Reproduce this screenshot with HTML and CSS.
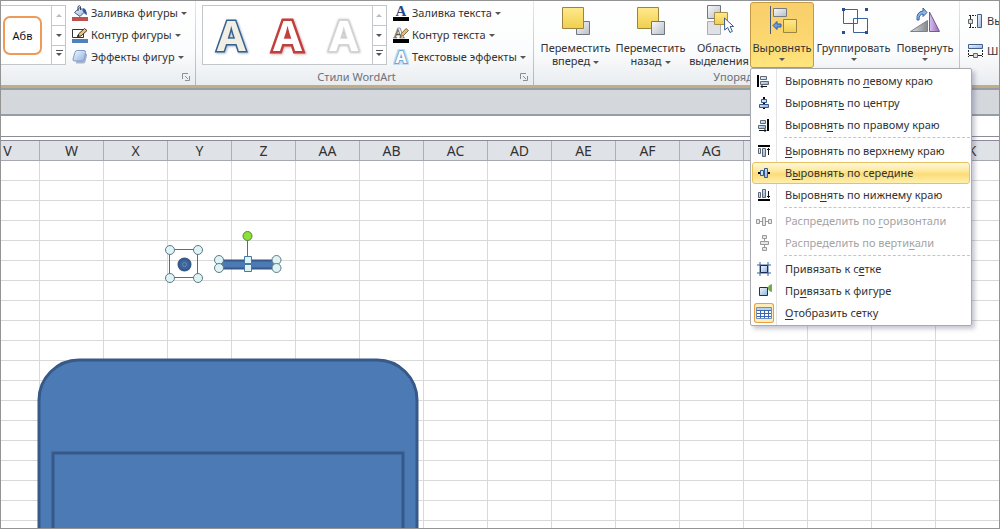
FILE: index.html
```html
<!DOCTYPE html>
<html lang="ru">
<head>
<meta charset="utf-8">
<title>Выравнивание фигур</title>
<link rel="stylesheet" href="styles.css">
</head>
<body>
<svg class="defs" aria-hidden="true">
  <defs>
    <linearGradient id="gold" x1="0" y1="0" x2="0" y2="1"><stop offset="0" stop-color="#ffe98c"/><stop offset="1" stop-color="#f0cf4e"/></linearGradient>
    <linearGradient id="steel" x1="0" y1="0" x2="1" y2="1"><stop offset="0" stop-color="#f8f9fa"/><stop offset="1" stop-color="#b9bec6"/></linearGradient>
    <linearGradient id="blue" x1="0" y1="0" x2="1" y2="1"><stop offset="0" stop-color="#f4f9ff"/><stop offset="1" stop-color="#8fb2dd"/></linearGradient>
    <linearGradient id="violet" x1="0" y1="0" x2="1" y2="0"><stop offset="0" stop-color="#d9c3ec"/><stop offset="1" stop-color="#9068b4"/></linearGradient>
    <linearGradient id="gray" x1="0" y1="0" x2="1" y2="0"><stop offset="0" stop-color="#dcdfe2"/><stop offset="1" stop-color="#85898f"/></linearGradient>
  </defs>
</svg>
<main class="window">
  <header class="ribbon">
    <section class="group group-shapes">
      <div class="row">
        <div class="gallery gallery-shape">
          <button class="shape-style">Абв</button>
          <div class="scroller">
            <button aria-label="Вверх" disabled><i class="arrow up"></i></button>
            <button aria-label="Вниз"><i class="arrow"></i></button>
            <button aria-label="Ещё"><i class="arrow more"></i></button>
          </div>
        </div>
        <div class="tools">
          <button class="tool">
            <svg width="16" height="16" viewBox="0 0 16 16"><path d="M2.500 7.500 8 2.500l4.500 4.500L8 11.500z" fill="url(#blue)" stroke="#4a5c7c"/><path d="M6 6V1.500q1.500-1.500 2.500 0V5" fill="none" stroke="#39455c"/><path d="M10.500 3q4 0 4.500 7-3-1-4-4z" fill="#2f5aa0"/><path d="M0 12h16v4H0z" fill="#c0504d"/></svg>
            Заливка фигуры<i class="arrow"></i></button>
          <button class="tool">
            <svg width="16" height="16" viewBox="0 0 16 16"><path d="M.5 2.500h11v8H.5z" fill="#fff" stroke="#333"/><path d="M5.500 9.500 7 6.500 12.500 1.500 15 3.500 9 9z" fill="#e9c37d" stroke="#4d3d28"/><path d="m5 10 1-2.500L7.500 9z" fill="#222"/><path d="M0 12h16v4H0z" fill="#4f81bd"/></svg>
            Контур фигуры<i class="arrow"></i></button>
          <button class="tool">
            <svg width="16" height="16" viewBox="0 0 16 16"><path d="M5 4.500h9q1.500 0 1 2l-1.500 6q-.5 2-2 2H4z" fill="#a9b6cc"/><path d="M5 1.500h7q2 0 1.500 2l-1 6.500q-.5 2-2.500 2H2.500Q.5 12 1 10l2-6.500q.5-2 2-2z" fill="url(#blue)" stroke="#7f9dca"/></svg>
            Эффекты фигур<i class="arrow"></i></button>
        </div>
      </div>
      <footer><span></span><button class="launcher" aria-label="Параметры фигур"><svg width="8" height="8" viewBox="0 0 8 8"><path d="M.5 6V.5H6M3 3l3 3M7.500 3v4.500H3" fill="none" stroke="#8a8f96"/></svg></button></footer>
    </section>

    <section class="group group-wordart">
      <div class="row">
        <div class="gallery gallery-art">
          <button class="art art-blue">A</button>
          <button class="art art-red">A</button>
          <button class="art art-white">A</button>
          <div class="scroller">
            <button aria-label="Вверх" disabled><i class="arrow up"></i></button>
            <button aria-label="Вниз"><i class="arrow"></i></button>
            <button aria-label="Ещё"><i class="arrow more"></i></button>
          </div>
        </div>
        <div class="tools">
          <button class="tool">
            <svg width="16" height="16" viewBox="0 0 16 16"><text x="8" y="11" class="icon-a" fill="#27498a">A</text><path d="M0 12h16v4H0z"/></svg>
            Заливка текста<i class="arrow"></i></button>
          <button class="tool">
            <svg width="16" height="16" viewBox="0 0 16 16"><text x="6" y="11" class="icon-a" fill="#fff" stroke="#555" stroke-width=".7">A</text><path d="M7 9.500 8.500 6.500 13 1.500 15.500 3.500 10.500 8.500z" fill="#e6bb78" stroke="#6b5132" stroke-width=".8"/><path d="M0 12h16v4H0z"/></svg>
            Контур текста<i class="arrow"></i></button>
          <button class="tool">
            <svg width="16" height="16" viewBox="0 0 16 16"><text x="8" y="14" class="icon-glow" fill="#fff" stroke="#c3def2" stroke-width="5">A</text><text x="8" y="14" class="icon-glow" fill="#fff" stroke="#6ea8d6" stroke-width="2">A</text></svg>
            Текстовые эффекты<i class="arrow"></i></button>
        </div>
      </div>
      <footer><span>Стили WordArt</span><button class="launcher" aria-label="Параметры WordArt"><svg width="8" height="8" viewBox="0 0 8 8"><path d="M.5 6V.5H6M3 3l3 3M7.500 3v4.500H3" fill="none" stroke="#8a8f96"/></svg></button></footer>
    </section>

    <section class="group group-arrange">
      <div class="row">
        <button class="big w-move">
          <svg width="32" height="32" viewBox="0 0 32 32"><path d="M16.500 16.500h13v13h-13z" fill="url(#steel)" stroke="#72777f"/><path d="M2.500 2.500h21v21h-21z" fill="url(#gold)" stroke="#9b8440"/></svg>
          <span>Переместить<br>вперед<i class="arrow"></i></span></button>
        <button class="big w-move">
          <svg width="32" height="32" viewBox="0 0 32 32"><path d="M2.500 2.500h21v21h-21z" fill="url(#gold)" stroke="#9b8440"/><path d="M16.500 16.500h13v13h-13z" fill="url(#steel)" stroke="#72777f"/></svg>
          <span>Переместить<br>назад<i class="arrow"></i></span></button>
        <button class="big w-area">
          <svg width="32" height="32" viewBox="0 0 32 32"><path d="M4.500.5h13v13h-13z" fill="url(#steel)" stroke="#72777f"/><path d="M4.500 16.500h13v13h-13z" fill="#dfe1e4" stroke="#a9adb3"/><path d="M11.500 7.500h13v12h-13z" fill="url(#gold)" stroke="#a68f46"/><path d="m21.500 13 .2 12 3-2.500 2.300 5 2.400-1.200-2.300-4.800h3.500z" fill="#fff" stroke="#3e5a86"/></svg>
          <span>Область<br>выделения</span></button>
        <div class="drop">
          <button class="big active" aria-expanded="true">
            <svg width="32" height="32" viewBox="0 0 32 32"><path d="M4.500 1v28" stroke="#4b5b75"/><path d="M7.500 3.500h13v8h-13z" fill="url(#steel)" stroke="#767b83"/><path d="M17.500 14.500h13v13h-13z" fill="url(#gold)" stroke="#9b8440"/><path d="m7 20.500 4-4V19h4v3h-4v2.500z" fill="#6a9be0" stroke="#345c9c"/></svg>
            <span>Выровнять</span><i class="arrow"></i></button>
          <div class="menu" role="menu">
            <button class="item"><svg width="16" height="16" viewBox="0 0 16 16"><path d="M1 2h2v12H1z"/><path d="M4.500 3.500h6v3h-6zM4.500 8.500h8v3h-8z" fill="url(#blue)" stroke="#5c6675"/><path d="M5 13.500h6M6.500 12 5 13.500 6.500 15" fill="none" stroke="#111"/></svg><span>Выровнять по <u>л</u>евому краю</span></button>
            <button class="item"><svg width="16" height="16" viewBox="0 0 16 16"><path d="M7 2h2v12H7z"/><path d="M5.500 4.500h5v3h-5zM3.500 9.500h9v3h-9z" fill="url(#blue)" stroke="#365789"/></svg><span>Выровнят<u>ь</u> по центру</span></button>
            <button class="item"><svg width="16" height="16" viewBox="0 0 16 16"><path d="M11 2h2v12h-2z"/><path d="M4.500 3.500h5v3h-5zM2.500 8.500h7v3h-7z" fill="url(#blue)" stroke="#5c6675"/><path d="M3 13.500h7M8.500 12l1.500 1.500L8.500 15" fill="none" stroke="#111"/></svg><span>Выровн<u>я</u>ть по правому краю</span></button>
            <hr>
            <button class="item"><svg width="16" height="16" viewBox="0 0 16 16"><path d="M2 2h12v2H2z"/><path d="M2.500 5.500h2v5h-2zM6.500 5.500h3v8h-3z" fill="url(#blue)" stroke="#5c6675"/><path d="M12.500 5v7M11 7l1.500-1.500L14 7" fill="none" stroke="#111"/></svg><span><u>В</u>ыровнять по верхнему краю</span></button>
            <button class="item selected"><svg width="16" height="16" viewBox="0 0 16 16"><path d="M2 7h12v2H2z"/><path d="M4.500 5.500h3v5h-3zM8.500 3.500h3v9h-3z" fill="url(#blue)" stroke="#365789"/></svg><span>В<u>ы</u>ровнять по середине</span></button>
            <button class="item"><svg width="16" height="16" viewBox="0 0 16 16"><path d="M2 12h12v2H2z"/><path d="M2.500 5.500h2v5h-2zM6.500 2.500h3v8h-3z" fill="url(#blue)" stroke="#5c6675"/><path d="M12.500 4v7M11 9l1.500 1.500L14 9" fill="none" stroke="#111"/></svg><span>Выров<u>н</u>ять по нижнему краю</span></button>
            <hr>
            <button class="item" disabled><svg width="16" height="16" viewBox="0 0 16 16"><path d="M0 8.500h16" stroke="#999"/><path d="M.5 6.500h3v4h-3zM6.500 4.500h3v8h-3zM12.500 6.500h3v4h-3z" fill="#e6e6e6" stroke="#999"/></svg><span>Распределить по <u>г</u>оризонтали</span></button>
            <button class="item" disabled><svg width="16" height="16" viewBox="0 0 16 16"><path d="M8.500 0v16" stroke="#999"/><path d="M6.500.5h4v3h-4zM4.500 6.500h8v3h-8zM6.500 12.500h4v3h-4z" fill="#e6e6e6" stroke="#999"/></svg><span>Распределить по верти<u>к</u>али</span></button>
            <hr>
            <button class="item"><svg width="16" height="16" viewBox="0 0 16 16"><path d="M4 1v14M12 1v14M1 4h14M1 12h14" stroke="#365f9c"/><path d="M4.500 4.500h7v7h-7z" fill="url(#blue)" stroke="#182d55"/></svg><span>Привязать к с<u>е</u>тке</span></button>
            <button class="item"><svg width="16" height="16" viewBox="0 0 16 16"><path d="M16 1v8q-4-1-4-4t4-4z" fill="#72b043"/><path d="M3.500 4.500h8v8h-8z" fill="url(#blue)" stroke="#2b3038"/></svg><span>Пр<u>и</u>вязать к фигуре</span></button>
            <button class="item checked"><svg width="16" height="16" viewBox="0 0 16 16"><path d="M.5 2.500h15v11H.5z" fill="#fff" stroke="#6d8fc4"/><path d="M1 3h14v2H1z" fill="#bdd0ec"/><path d="M4.500 5v8M8.500 5v8M12.500 5v8M1 5.500h14M1 8.500h14M1 11.500h14" stroke="#3d68ad"/></svg><span><u>О</u>тобразить сетку</span></button>
          </div>
        </div>
        <button class="big w-group">
          <svg width="32" height="32" viewBox="0 0 32 32"><g fill="none" stroke="#3b639f"><path d="M5.500 4.500h14v14h-14zM15.500 13.500h14v14h-14z"/></g><path d="M4 3h3v3H4zM27 3h3v3h-3zM4 26h3v3H4zM27 26h3v3h-3z" fill="#2b4f8c"/></svg>
          <span>Группировать</span><i class="arrow"></i></button>
        <button class="big w-rotate">
          <svg width="32" height="32" viewBox="0 0 32 32"><path d="m1.500 26.500 17-11v11z" fill="url(#gray)" stroke="#7d8187"/><path d="M20.500 26.500V7l10 19.500z" fill="url(#violet)" stroke="#77559a"/><path d="M8 15q-1-8 6-9V3l4 4.500-4 4V9q-4 0-4 6z" fill="#8bb4ea" stroke="#34609f"/></svg>
          <span>Повернуть</span><i class="arrow"></i></button>
      </div>
      <footer><span>Упорядочить</span></footer>
    </section>

    <section class="group group-size">
      <label class="size"><svg width="16" height="16" viewBox="0 0 16 16"><path d="M10.500 1.500h4v13h-4z" fill="url(#blue)" stroke="#41608f"/><path d="M2 2.500h7M2 14.500h7" stroke="#222" stroke-dasharray="2 1"/><path d="M3.500 3v3M3.500 11v3" stroke="#222"/><path d="M1.500 6.500h4v4h-4z" fill="#ddd" stroke="#666"/></svg><span>Высота:</span></label>
      <label class="size"><svg width="16" height="16" viewBox="0 0 16 16"><path d="M1.500 1.500h14v4h-14z" fill="url(#blue)" stroke="#41608f"/><path d="M1.500 7v7M15.500 7v7" stroke="#222" stroke-dasharray="2 1"/><path d="M2 12.500h4M11 12.500h4" stroke="#222"/><path d="M6.500 10.500h4v4h-4z" fill="#ddd" stroke="#666"/></svg><span>Ширина:</span></label>
    </section>
  </header>

  <div class="strip"></div>
  <input class="formula" aria-label="Строка формул">

  <table class="columns">
    <thead><tr><th class="first">V</th><th>W</th><th>X</th><th>Y</th><th>Z</th><th>AA</th><th>AB</th><th>AC</th><th>AD</th><th>AE</th><th>AF</th><th>AG</th><th>AH</th><th>AI</th><th>AJ</th><th>AK</th></tr></thead>
  </table>
  <div class="sheet">
    <svg class="shapes" width="440" height="640" viewBox="1 161 440 640">
      <g fill="#4b7ab5" stroke="#36598a">
        <rect x="39" y="360" width="378" height="420" rx="40" stroke-width="3"/>
        <rect x="53" y="453" width="350" height="320" stroke-width="3"/>
        <rect x="219.500" y="260.500" width="57" height="8" stroke-width="2"/>
        <circle cx="184.500" cy="264.500" r="6" fill="#3d659c" stroke-width="2"/>
      </g>
      <circle cx="184.500" cy="264.500" r="2" fill="none" stroke="#6788b3"/>
      <path d="M169.500 249.500h28v28h-28zM247.500 236v24" fill="none" stroke="#4c718c"/>
      <g fill="#dff3f5" stroke="#5d7a85">
        <circle cx="170" cy="250" r="4.500"/><circle cx="198" cy="250" r="4.500"/><circle cx="170" cy="278" r="4.500"/><circle cx="198" cy="278" r="4.500"/>
        <circle cx="219" cy="260" r="4.500"/><circle cx="219" cy="268" r="4.500"/><circle cx="276.500" cy="260" r="4.500"/><circle cx="276.500" cy="268" r="4.500"/>
        <path d="M244.500 256.500h7v7h-7zM244.500 264.500h7v7h-7z" stroke="#4879a3"/>
      </g>
      <circle cx="247.500" cy="236" r="4.500" fill="#8ae234" stroke="#5a7d45"/>
    </svg>
  </div>
</main>
</body>
</html>
```
FILE: styles.css
```css
* { box-sizing: border-box; }
body {
  margin: 0;
  font: 11px/16px "Noto Sans", "Open Sans", sans-serif;
  color: #333;
  overflow: hidden;
}
button, input { font: inherit; color: inherit; margin: 0; padding: 0; border: 0; background: none; }
svg { display: block; flex: none; }
.defs { position: absolute; width: 0; height: 0; }

.window {
  display: flex;
  flex-direction: column;
  height: 100vh;
  border: 1px solid #939393;
  background: #fff;
}

/* Ribbon */
.ribbon {
  display: flex;
  flex: none;
  height: 87px;
  border-bottom: 3px solid #c2ae86;
  background: linear-gradient(#fff, #fbfcfd 60%, #e9ecef);
}
.group {
  display: flex;
  flex: none;
  flex-direction: column;
  justify-content: space-between;
  border-right: 1px solid;
  border-image: linear-gradient(#e8e8e8, #d3b566) 1;
}
.group-shapes { width: 195px; }
.group-wordart { width: 338px; padding-left: 6px; }
.group-arrange { width: 426px; padding-left: 4px; }
.group-size { flex: 1; min-width: 0; overflow: hidden; justify-content: flex-start; gap: 14px; padding: 12px 0 0 7px; border: 0; }
.row { display: flex; }
.group footer {
  display: flex;
  height: 18px;
  color: #6b717b;
  align-items: center;
  padding: 0 5px;
}
.group footer span { flex: 1; text-align: center; }
.group-wordart footer span { padding-right: 14px; }
.launcher { width: 8px; height: 8px; }

.arrow {
  display: inline-block;
  border: 3px solid transparent;
  border-top-color: #555;
  border-bottom: 0;
  vertical-align: middle;
}
.arrow.up { border-top: 0; border-bottom: 3px solid #b9bcc0; }
.arrow.more { position: relative; }
.arrow.more::before { content: ""; position: absolute; left: -3px; top: -6px; width: 7px; height: 1px; background: #555; }

.gallery {
  display: flex;
  flex: none;
  height: 60px;
  margin-top: 4px;
  border: 1px solid #c3c7cc;
  background: #fff;
}
.gallery-shape { width: 65px; border-left: 0; justify-content: space-between; }
.gallery-art { width: 185px; }
.shape-style {
  width: 39px;
  height: 39px;
  margin: 10px 0 0 2px;
  border: 2px solid #ef9a56;
  border-radius: 7px;
  color: #111;
}
.scroller {
  display: grid;
  grid-template-rows: repeat(3, 1fr);
  width: 14px;
  border-left: 1px solid #c3c7cc;
}
.scroller button { display: flex; align-items: center; justify-content: center; }
.scroller button + button { border-top: 1px solid #c3c7cc; }
.art {
  flex: 1;
  font: bold 42px/58px "Noto Sans", sans-serif;
  paint-order: stroke fill;
}
.art-blue { color: #f1efe4; -webkit-text-stroke: 3px #35608f; filter: drop-shadow(1px 1px 1px #a9b8cc); }
.art-red { color: #fff; -webkit-text-stroke: 5px #c0403d; filter: drop-shadow(1px 1px 1px #d5b5b5); }
.art-white { color: #fff; -webkit-text-stroke: 3px #d4d4d4; filter: drop-shadow(0 0 1px #a5a5a5); }

.tools { display: flex; flex: none; flex-direction: column; padding: 1px 0 0 6px; }
.tool { display: flex; align-items: center; gap: 3px; height: 22px; white-space: nowrap; }
.icon-a { font: bold 15px "Liberation Serif", serif; text-anchor: middle; }
.icon-glow { font: bold 16px "Noto Sans", sans-serif; text-anchor: middle; paint-order: stroke; }

.big {
  display: flex;
  flex: none;
  flex-direction: column;
  align-items: center;
  height: 66px;
  padding-top: 3px;
  gap: 4px;
  line-height: 13px;
  white-space: nowrap;
  border: 1px solid transparent;
}
.big span .arrow { margin-left: 3px; }
.w-move { width: 75px; }
.w-area { width: 62px; }
.w-group { width: 79px; }
.w-rotate { width: 64px; }
.drop { position: relative; z-index: 2; }
.active {
  width: 64px;
  margin-top: 1px;
  padding-top: 2px;
  border-color: #c39a45;
  border-radius: 3px;
  background: linear-gradient(#f9cf6b, #fbd66f 50%, #ffe57c);
}

/* Drop-down menu */
.menu {
  position: absolute;
  top: 100%;
  left: 0;
  width: 222px;
  padding: 1px 0;
  border: 1px solid #a7abb0;
  border-radius: 2px;
  background: linear-gradient(90deg, #fff 25px, #e2e4e7 25px, #e2e4e7 26px, #fff 26px);
  box-shadow: 3px 3px 4px rgba(70, 70, 110, .3);
}
.item {
  display: flex;
  align-items: center;
  gap: 13px;
  width: 218px;
  height: 22px;
  margin-left: 1px;
  padding-left: 3px;
  border: 1px solid transparent;
  border-radius: 3px;
  white-space: nowrap;
}
.item:disabled { color: #a3a3a3; }
.item u { text-underline-offset: 2px; }
.selected {
  border-color: #e5c365;
  background: linear-gradient(#fff8dc, #fde692 45%, #fbdb77 55%, #fff0ae);
}
.checked svg { background: #fdedb9; box-shadow: 0 0 0 1px #fdedb9, 0 0 0 2px #e8a046; border-radius: 1px; }
.menu hr { height: 2px; margin: 1px 1px 1px 33px; border: 0; border-top: 1px dashed #c5c5c5; }

.size { display: flex; gap: 4px; align-items: center; white-space: nowrap; }

/* Formula bar and sheet */
.strip { flex: none; height: 28px; border-top: 2px solid #969da5; border-bottom: 2px solid #969da5; background: #d4d8dd; }
.formula { flex: none; width: 100%; height: 21px; border-bottom: 1px solid #8d8d98; background: #fff; }
.columns {
  flex: none;
  table-layout: fixed;
  width: 100%;
  margin-top: 3px;
  border-collapse: separate;
  border-spacing: 0;
  border-top: 1px solid #8a8a9c;
  background: #dfe2e7;
}
.columns tr { display: flex; overflow: hidden; border-bottom: 1px solid #a5a8ae; }
.columns th { flex: none; width: 64px; height: 19px; padding: 0; font-weight: 400; font-size: 14px; line-height: 20px; border-right: 1px solid #abb0b6; }
.columns .first { width: 39px; padding-right: 25px; }
.columns thead { display: block; }
.sheet {
  flex: 1;
  min-height: 0;
  overflow: hidden;
  background-image: linear-gradient(90deg, transparent 63px, #d9d9d9 63px), linear-gradient(transparent 19px, #d9d9d9 19px);
  background-size: 64px 20px;
  background-position: 39px 0;
}
```
